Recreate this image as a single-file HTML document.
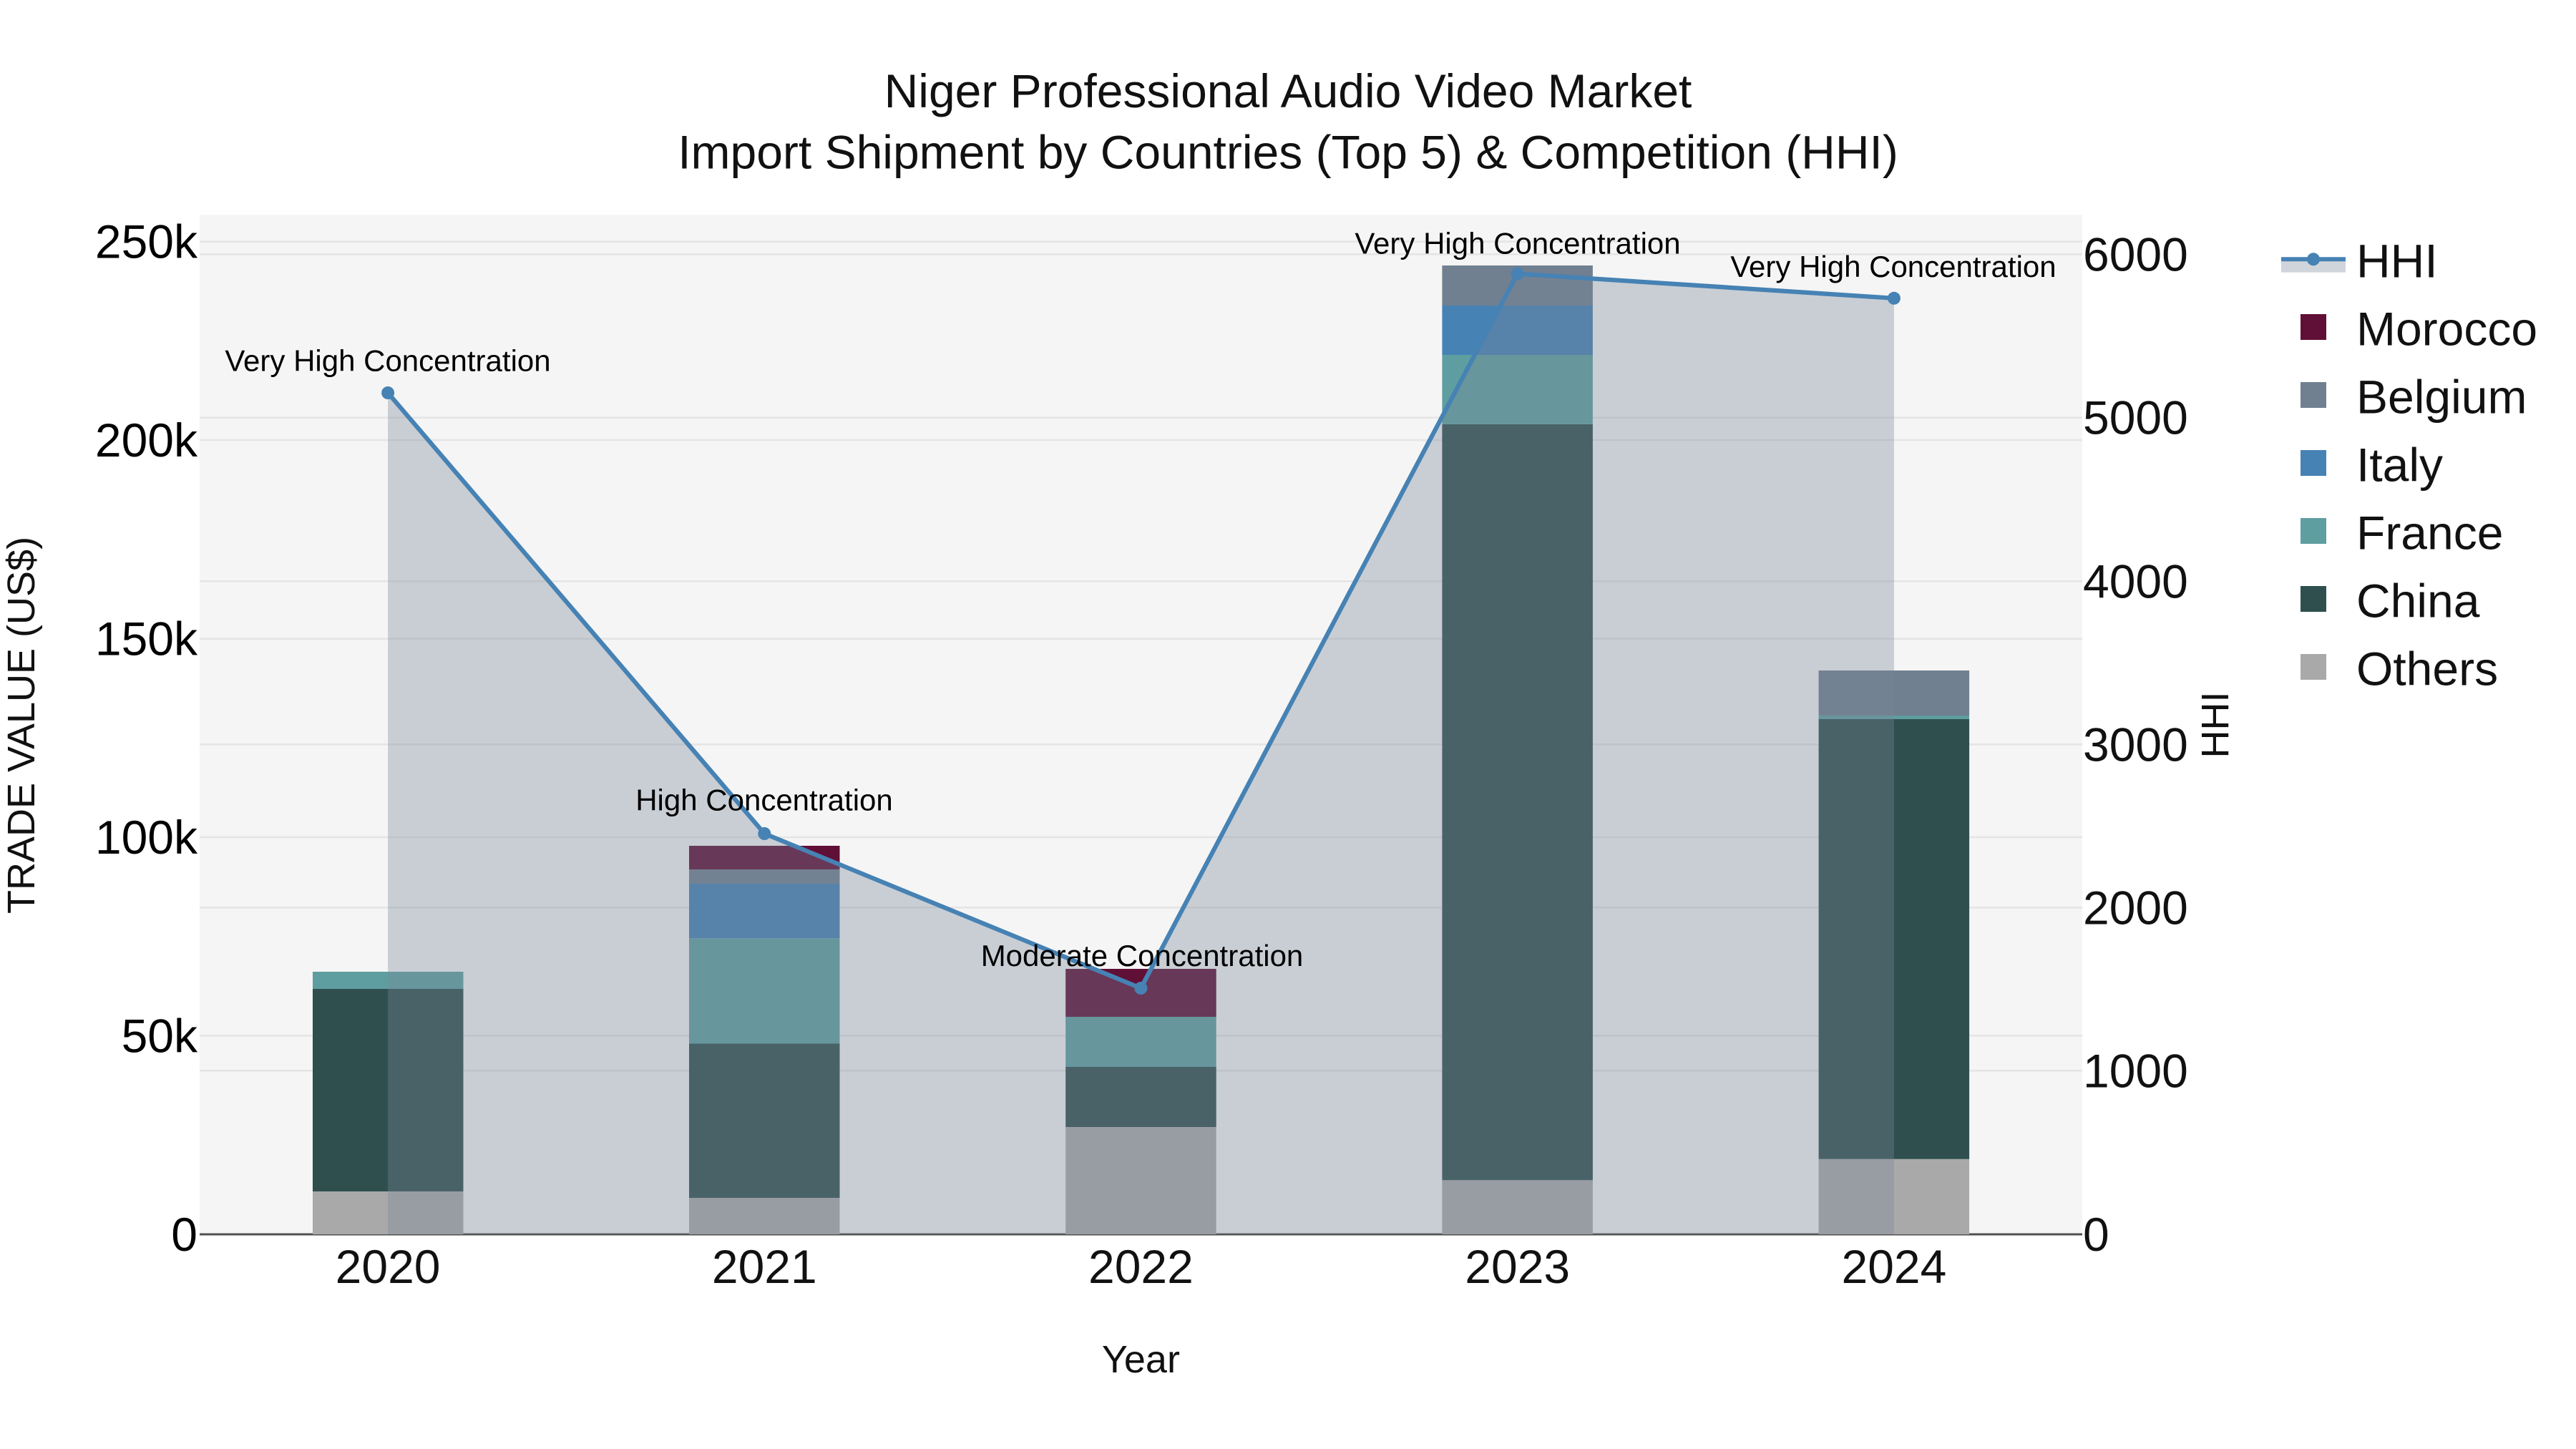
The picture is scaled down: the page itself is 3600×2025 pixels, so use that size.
<!DOCTYPE html>
<html>
<head>
<meta charset="utf-8">
<style>
html,body{margin:0;padding:0;background:#fff;width:3600px;height:2025px;overflow:hidden}
svg{display:block}
text{font-family:"Liberation Sans",Arial,sans-serif}
</style>
</head>
<body>
<svg width="3600" height="2025" viewBox="0 0 3600 2025" xmlns="http://www.w3.org/2000/svg">
<rect width="3600" height="2025" fill="#fff"/>
<rect x="279" y="300" width="2631" height="1425" fill="#f5f5f5"/>
<g stroke="#e5e5e5" stroke-width="2.6">
<line x1="279" x2="2910" y1="337.7" y2="337.7"/>
<line x1="279" x2="2910" y1="355.3" y2="355.3"/>
<line x1="279" x2="2910" y1="583.7" y2="583.7"/>
<line x1="279" x2="2910" y1="615" y2="615"/>
<line x1="279" x2="2910" y1="812.3" y2="812.3"/>
<line x1="279" x2="2910" y1="892.7" y2="892.7"/>
<line x1="279" x2="2910" y1="1040.3" y2="1040.3"/>
<line x1="279" x2="2910" y1="1170" y2="1170"/>
<line x1="279" x2="2910" y1="1268.3" y2="1268.3"/>
<line x1="279" x2="2910" y1="1447.3" y2="1447.3"/>
<line x1="279" x2="2910" y1="1496.3" y2="1496.3"/>
</g>
<line x1="279" x2="2910" y1="1725" y2="1725" stroke="#505050" stroke-width="3"/>
<!-- bars 2020 -->
<rect x="437" y="1665" width="210.5" height="60" fill="#a9a9a9"/>
<rect x="437" y="1382" width="210.5" height="283" fill="#2f4f4f"/>
<rect x="437" y="1358" width="210.5" height="24" fill="#5f9ea0"/>
<!-- bars 2021 -->
<rect x="963" y="1674" width="210.5" height="51" fill="#a9a9a9"/>
<rect x="963" y="1458.5" width="210.5" height="215.5" fill="#2f4f4f"/>
<rect x="963" y="1311.2" width="210.5" height="147.3" fill="#5f9ea0"/>
<rect x="963" y="1235" width="210.5" height="76.2" fill="#4682b4"/>
<rect x="963" y="1215" width="210.5" height="20" fill="#708090"/>
<rect x="963" y="1182" width="210.5" height="33" fill="#600f37"/>
<!-- bars 2022 -->
<rect x="1489.2" y="1575" width="210.5" height="150" fill="#a9a9a9"/>
<rect x="1489.2" y="1491" width="210.5" height="84" fill="#2f4f4f"/>
<rect x="1489.2" y="1421" width="210.5" height="70" fill="#5f9ea0"/>
<rect x="1489.2" y="1354" width="210.5" height="67" fill="#600f37"/>
<!-- bars 2023 -->
<rect x="2015.4" y="1649.3" width="210.5" height="75.7" fill="#a9a9a9"/>
<rect x="2015.4" y="592.9" width="210.5" height="1056.4" fill="#2f4f4f"/>
<rect x="2015.4" y="496" width="210.5" height="96.9" fill="#5f9ea0"/>
<rect x="2015.4" y="427" width="210.5" height="69" fill="#4682b4"/>
<rect x="2015.4" y="371" width="210.5" height="56" fill="#708090"/>
<!-- bars 2024 -->
<rect x="2541.6" y="1619.8" width="210.5" height="105.2" fill="#a9a9a9"/>
<rect x="2541.6" y="1005" width="210.5" height="614.8" fill="#2f4f4f"/>
<rect x="2541.6" y="1000" width="210.5" height="5" fill="#5f9ea0"/>
<rect x="2541.6" y="937" width="210.5" height="63" fill="#708090"/>
<!-- area -->
<polygon points="542.1,549 1068.3,1165 1594.4,1381 2120.7,382.6 2646.9,416.8 2646.9,1725 542.1,1725" fill="rgba(119,136,153,.35)"/>
<polyline points="542.1,549 1068.3,1165 1594.4,1381 2120.7,382.6 2646.9,416.8" fill="none" stroke="#4682b4" stroke-width="6.2" stroke-linejoin="round"/>
<g fill="#4682b4">
<circle cx="542.1" cy="549" r="9"/>
<circle cx="1068.3" cy="1165" r="9"/>
<circle cx="1594.4" cy="1381" r="9"/>
<circle cx="2120.7" cy="382.6" r="9"/>
<circle cx="2646.9" cy="416.8" r="9"/>
</g>
<!-- annotations -->
<g font-size="42" text-anchor="middle" fill="#000">
<text x="542" y="518.7">Very High Concentration</text>
<text x="1068" y="1132.4">High Concentration</text>
<text x="1596" y="1350">Moderate Concentration</text>
<text x="2121" y="354.6">Very High Concentration</text>
<text x="2646" y="387">Very High Concentration</text>
</g>
<!-- title -->
<g font-size="66" text-anchor="middle" fill="#111">
<text x="1800" y="150">Niger Professional Audio Video Market</text>
<text x="1800" y="235.7">Import Shipment by Countries (Top 5) &amp; Competition (HHI)</text>
</g>
<!-- left ticks -->
<g font-size="66" text-anchor="end" fill="#000">
<text x="276" y="360.7">250k</text>
<text x="276" y="638">200k</text>
<text x="276" y="915.7">150k</text>
<text x="276" y="1193">100k</text>
<text x="276" y="1470.3">50k</text>
<text x="276" y="1748">0</text>
</g>
<!-- right ticks -->
<g font-size="66" fill="#111">
<text x="2911" y="378.3">6000</text>
<text x="2911" y="606.7">5000</text>
<text x="2911" y="835.3">4000</text>
<text x="2911" y="1063.3">3000</text>
<text x="2911" y="1291.3">2000</text>
<text x="2911" y="1519.3">1000</text>
<text x="2911" y="1748">0</text>
</g>
<!-- x ticks -->
<g font-size="66" text-anchor="middle" fill="#111">
<text x="542.1" y="1793">2020</text>
<text x="1068.3" y="1793">2021</text>
<text x="1594.4" y="1793">2022</text>
<text x="2120.7" y="1793">2023</text>
<text x="2646.9" y="1793">2024</text>
</g>
<!-- axis titles -->
<text x="1594.4" y="1918" font-size="54" text-anchor="middle" fill="#111">Year</text>
<text transform="translate(48,1013.5) rotate(-90)" font-size="54" text-anchor="middle" fill="#111">TRADE VALUE (US$)</text>
<text transform="translate(3114,1013) rotate(-90)" font-size="54" text-anchor="middle" fill="#111">HHI</text>
<!-- legend -->
<rect x="3188" y="362" width="90" height="18.7" fill="rgba(119,136,153,.35)"/>
<line x1="3188" x2="3278" y1="362.3" y2="362.3" stroke="#4682b4" stroke-width="6"/>
<circle cx="3233" cy="362.3" r="9" fill="#4682b4"/>
<rect x="3215" y="439" width="36" height="36" fill="#600f37"/>
<rect x="3215" y="534" width="36" height="36" fill="#708090"/>
<rect x="3215" y="629" width="36" height="36" fill="#4682b4"/>
<rect x="3215" y="724" width="36" height="36" fill="#5f9ea0"/>
<rect x="3215" y="819" width="36" height="36" fill="#2f4f4f"/>
<rect x="3215" y="914" width="36" height="36" fill="#a9a9a9"/>
<g font-size="66" fill="#111">
<text x="3293" y="387.7">HHI</text>
<text x="3293" y="482.7">Morocco</text>
<text x="3293" y="577.7">Belgium</text>
<text x="3293" y="672.7">Italy</text>
<text x="3293" y="767.7">France</text>
<text x="3293" y="862.7">China</text>
<text x="3293" y="957.7">Others</text>
</g>
</svg>
</body>
</html>
